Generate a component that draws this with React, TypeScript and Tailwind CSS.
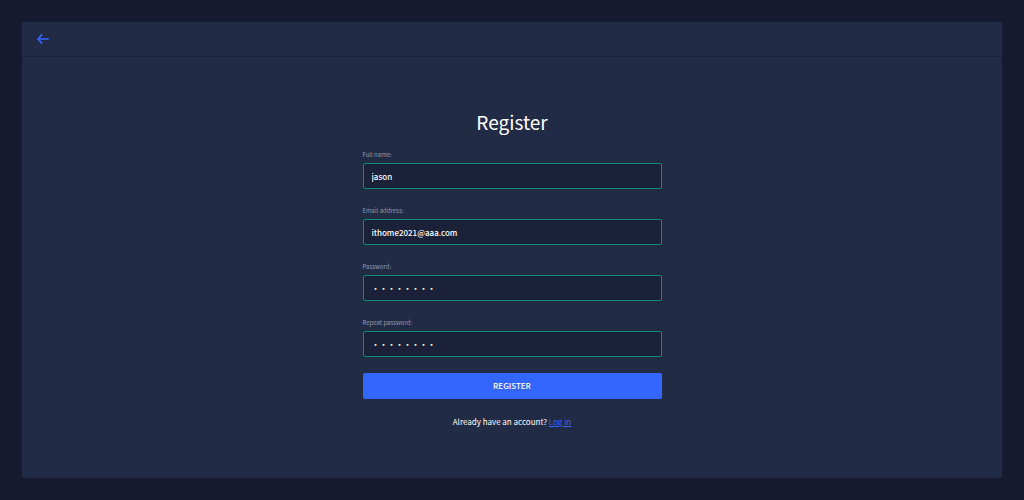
import { useState } from "react";

type Field = {
  id: string;
  label: string;
  type: "text" | "email" | "password";
  value: string;
};

const FIELDS: Field[] = [
  { id: "name", label: "Full name:", type: "text", value: "jason" },
  { id: "email", label: "Email address:", type: "email", value: "ithome2021@aaa.com" },
  { id: "password", label: "Password:", type: "password", value: "password" },
  { id: "repeat-password", label: "Repeat password:", type: "password", value: "password" },
];

function ArrowLeft() {
  return (
    <svg viewBox="0 0 12 12" className="h-3 w-3" fill="none" stroke="currentColor" aria-hidden="true">
      <path d="M11.3 6H1.2" strokeWidth="1.5" strokeLinecap="round" />
      <path d="M4.7 1.7L1.2 6l3.5 4.3" strokeWidth="1.7" strokeLinecap="round" strokeLinejoin="round" />
    </svg>
  );
}

function FormField({ field }: { field: Field }) {
  const [value, setValue] = useState(field.value);

  return (
    <div className="flex flex-col">
      <label htmlFor={field.id} className="mb-1 self-start text-[6px] leading-[8px] text-[#8f9bb3]">
        {field.label}
      </label>
      <input
        id={field.id}
        type={field.type}
        value={value}
        onChange={(e) => setValue(e.target.value)}
        className="h-[26px] w-full rounded-xs border border-[#0f8c72] bg-[#1a2138] px-2 text-[8px] font-medium text-white outline-none"
      />
    </div>
  );
}

export default function App() {
  return (
    <div className="flex min-h-screen bg-[#151a30] p-[22px] font-['Noto_Sans_CJK_TC',sans-serif] text-white">
      <main className="flex flex-1 flex-col rounded-xs bg-[#222b45]">
        <nav className="flex h-[35px] items-center border-b border-[#1a2038] px-[15px]">
          <a href="#" aria-label="Back" className="text-[#3366ff]">
            <ArrowLeft />
          </a>
        </nav>
        <div className="flex flex-1 items-center justify-center">
          <div className="w-full max-w-[299px]">
            <h1 className="mb-[13px] text-center text-[19px] leading-[32px]">Register</h1>
            <form onSubmit={(e) => e.preventDefault()}>
              <div className="flex flex-col gap-[18px]">
                {FIELDS.map((field) => (
                  <FormField key={field.id} field={field} />
                ))}
              </div>
              <button
                type="submit"
                className="mt-4 h-[26px] w-full rounded-xs bg-[#3366ff] text-[8px] font-medium uppercase"
              >
                Register
              </button>
            </form>
            <p className="mt-4 text-center text-[8px] leading-[14px]">
              Already have an account?{" "}
              <a href="#" className="text-[#3366ff] underline">
                Log in
              </a>
            </p>
          </div>
        </div>
      </main>
    </div>
  );
}
